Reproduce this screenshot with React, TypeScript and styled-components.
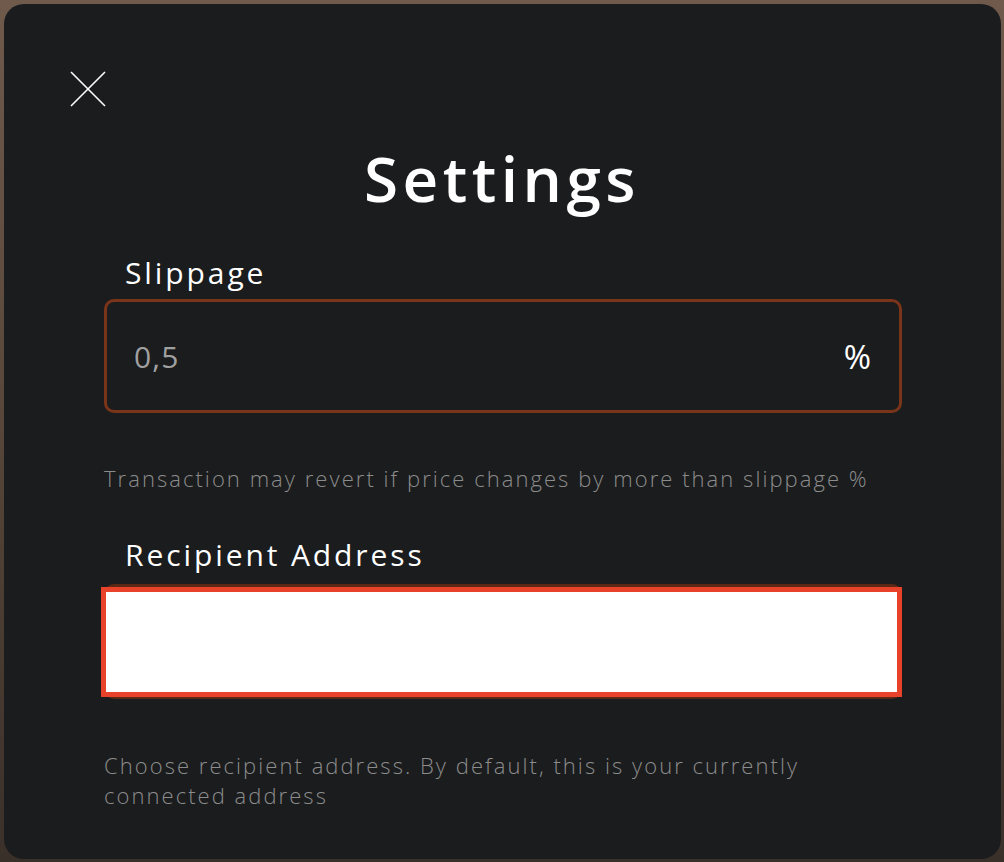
import React from "react";
import styled, { createGlobalStyle } from "styled-components";

const Global = createGlobalStyle`
  html, body { margin: 0; padding: 0; }
  body {
    width: 1004px;
    height: 862px;
    overflow: hidden;
    background: linear-gradient(180deg, #6f5a4c 0%, #574639 50%, #3a302a 100%);
    font-family: "Open Sans", "Noto Sans", sans-serif;
  }
`;

const Modal = styled.div`
  box-sizing: border-box;
  margin: 4px 3px 0 4px;
  width: 997px;
  height: 855px;
  background: #1b1c1e;
  border-radius: 20px;
  padding: 67px 101px 0 100px;
  display: flex;
  flex-direction: column;
`;

const CloseButton = styled.button`
  align-self: flex-start;
  margin-left: -34px;
  width: 36px;
  height: 36px;
  padding: 0;
  border: none;
  background: transparent;
  cursor: pointer;
  display: flex;
`;

const Title = styled.h1`
  margin: 31px 0 0;
  text-align: center;
  color: #ffffff;
  font-size: 62px;
  font-weight: 600;
  line-height: 80px;
  letter-spacing: 4.5px;
`;

const Label = styled.div<{ $top: number }>`
  margin: ${(p) => p.$top}px 0 0 21px;
  color: #ffffff;
  font-size: 30px;
  font-weight: 500;
  line-height: 40px;
  letter-spacing: 2.9px;
`;

const SlippageBox = styled.div`
  box-sizing: border-box;
  margin-top: 6px;
  width: 798px;
  height: 114px;
  border: 3px solid #7a341a;
  border-radius: 10px;
  display: flex;
  align-items: center;
  justify-content: space-between;
  padding: 0 28px 0 27px;
`;

const Value = styled.span`
  color: #a0a0a0;
  font-size: 30px;
  font-weight: 400;
  letter-spacing: 1.2px;
`;

const Unit = styled.span`
  color: #ffffff;
  font-size: 33px;
  font-weight: 400;
`;

const Helper = styled.p<{ $top: number; $wrap?: number }>`
  margin: ${(p) => p.$top}px 0 0;
  color: #8c8c8c;
  font-size: 22px;
  font-weight: 300;
  line-height: 30px;
  letter-spacing: 2.05px;
  max-width: ${(p) => (p.$wrap ? `${p.$wrap}px` : "none")};
  white-space: ${(p) => (p.$wrap ? "normal" : "nowrap")};
`;

const AddressBox = styled.div`
  position: relative;
  box-sizing: border-box;
  margin-top: 9px;
  width: 798px;
  height: 115px;
  border: 3px solid #5c2816;
  border-radius: 10px;
`;

const AddressInput = styled.input`
  position: absolute;
  top: 0;
  left: -6px;
  right: -3px;
  bottom: -1px;
  box-sizing: border-box;
  width: auto;
  height: auto;
  border: 5px solid #e8432a;
  background: #ffffff;
  outline: none;
  margin: 0;
  padding: 0 20px;
  font-size: 24px;
  font-family: inherit;
`;

export default function App() {
  return (
    <>
      <Global />
      <Modal>
        <CloseButton aria-label="Close">
          <svg width="36" height="36" viewBox="0 0 36 36">
            <path d="M1 1 L35 35 M35 1 L1 35" stroke="#ffffff" strokeWidth="1.6" fill="none" />
          </svg>
        </CloseButton>
        <Title>Settings</Title>
        <Label $top={35}>Slippage</Label>
        <SlippageBox>
          <Value>0,5</Value>
          <Unit>%</Unit>
        </SlippageBox>
        <Helper $top={50}>Transaction may revert if price changes by more than slippage %</Helper>
        <Label $top={42}>Recipient Address</Label>
        <AddressBox>
          <AddressInput type="text" />
        </AddressBox>
        <Helper $top={51} $wrap={700}>
          Choose recipient address. By default, this is your currently connected address
        </Helper>
      </Modal>
    </>
  );
}
